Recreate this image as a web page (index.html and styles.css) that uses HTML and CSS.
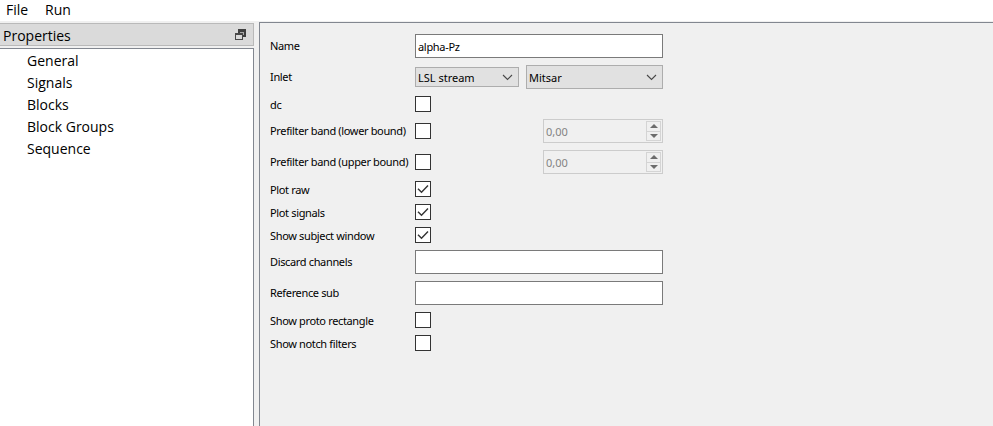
FILE: index.html
```html
<!DOCTYPE html>
<html lang="en">
<head>
<meta charset="utf-8">
<title>Properties</title>
<link rel="stylesheet" href="styles.css">
</head>
<body>
<nav class="menu"><span class="file">File</span><span>Run</span></nav>
<main class="workspace">
  <aside class="dock">
    <header class="dock-title"><span>Properties</span>
      <svg width="11" height="12" viewBox="0 0 11 12" shape-rendering="crispEdges"><path d="M3 0h8v8H8V4H3z" fill="#404040"/><path d="M5 3h4v3H8V4H5z" fill="#aaa"/><path d="M0 4h8v7H0z" fill="#484848"/><path d="M1 6h6v4H1z" fill="#dadada"/></svg>
    </header>
    <ul class="tree">
      <li>General</li><li>Signals</li><li>Blocks</li><li>Block Groups</li><li>Sequence</li>
    </ul>
  </aside>
  <section class="panel">
    <div class="row tall"><span class="label">Name</span><div class="field">alpha-Pz</div></div>
    <div class="row tall"><span class="label">Inlet</span>
      <div class="combo source"><span>LSL stream</span><svg width="11" height="7" viewBox="0 0 11 7"><path d="M1 1l4.5 4.5L10 1" fill="none" stroke="#484848" stroke-width="1.1"/></svg></div>
      <div class="combo device"><span>Mitsar</span><svg width="11" height="7" viewBox="0 0 11 7"><path d="M1 1l4.5 4.5L10 1" fill="none" stroke="#484848" stroke-width="1.1"/></svg></div>
    </div>
    <div class="row short"><span class="label">dc</span><i class="check"></i></div>
    <div class="row tall"><span class="label">Prefilter band (lower bound)</span><i class="check"></i>
      <div class="spin"><span>0,00</span><div class="steps"><b><svg width="8" height="4" viewBox="0 0 8 4"><path d="M0 4L4 0l4 4z"/></svg></b><b><svg width="8" height="4" viewBox="0 0 8 4"><path d="M0 0h8L4 4z"/></svg></b></div></div>
    </div>
    <div class="row tall"><span class="label">Prefilter band (upper bound)</span><i class="check"></i>
      <div class="spin"><span>0,00</span><div class="steps"><b><svg width="8" height="4" viewBox="0 0 8 4"><path d="M0 4L4 0l4 4z"/></svg></b><b><svg width="8" height="4" viewBox="0 0 8 4"><path d="M0 0h8L4 4z"/></svg></b></div></div>
    </div>
    <div class="row short"><span class="label">Plot raw</span><i class="check"><svg width="12" height="10" viewBox="0 0 12 10"><path d="M1 4.7l3.5 3.5L11 1.4"/></svg></i></div>
    <div class="row short"><span class="label">Plot signals</span><i class="check"><svg width="12" height="10" viewBox="0 0 12 10"><path d="M1 4.7l3.5 3.5L11 1.4"/></svg></i></div>
    <div class="row short"><span class="label">Show subject window</span><i class="check"><svg width="12" height="10" viewBox="0 0 12 10"><path d="M1 4.7l3.5 3.5L11 1.4"/></svg></i></div>
    <div class="row tall"><span class="label">Discard channels</span><div class="field"></div></div>
    <div class="row tall"><span class="label">Reference sub</span><div class="field"></div></div>
    <div class="row short"><span class="label">Show proto rectangle</span><i class="check"></i></div>
    <div class="row short"><span class="label">Show notch filters</span><i class="check"></i></div>
  </section>
</main>
</body>
</html>
```
FILE: styles.css
```css
* { box-sizing: border-box; }
body { margin: 0; height: 426px; overflow: hidden; display: flex; flex-direction: column; background: #f0f0f0; color: #000; font: 14px/20px "Open Sans", "Noto Sans", sans-serif; }
svg { display: block; flex: none; }
.menu { height: 21px; flex: none; background: #fff; padding-left: 6px; display: flex; }
.file { width: 39px; }
.workspace { flex: 1; min-height: 0; display: flex; gap: 5px; padding-top: 1px; }
.dock { width: 254px; display: flex; flex-direction: column; gap: 2px; padding-top: 1px; }
.dock-title { height: 23px; flex: none; border: 1px solid #b9b9b9; border-left: 0; background: #dadada; padding: 2px 7px 0 3px; display: flex; justify-content: space-between; }
.dock-title svg { margin-top: 3px; }
.tree { flex: 1; margin: 0; padding: 1px 0 0 27px; list-style: none; background: #fff; border: solid #828790; border-width: 1px 1px 0 0; line-height: 22px; }
.panel { flex: 1; border: solid #828790; border-width: 1px 0 0 1px; padding: 11px 0 0 10px; display: flex; flex-direction: column; gap: 7px; font: 11px/16px "Noto Sans", sans-serif; }
.row { height: 16px; display: flex; align-items: center; flex: none; }
.tall { height: 24px; }
.label { width: 145px; flex: none; white-space: nowrap; letter-spacing: -.35px; }
.short .label { padding-top: 2px; }
.field { width: 248px; height: 24px; border: 1px solid #7a7a7a; background: #fff; padding: 4px 2px; letter-spacing: -.3px; }
.combo { border: 1px solid #adadad; background: #e1e1e1; display: flex; align-items: center; justify-content: space-between; padding: 0 5px 0 2px; }
.combo span, .spin span { padding-top: 2px; }
.source { width: 104px; height: 20px; margin-right: 7px; }
.device { width: 137px; height: 24px; }
.check { width: 16px; height: 16px; flex: none; border: 1px solid #333; background: #fff; display: flex; align-items: center; justify-content: center; }
.check path { fill: none; stroke: #333; stroke-width: 1.4; }
.spin { width: 120px; height: 24px; margin-left: 112px; border: 1px solid #ccc; color: #838383; display: flex; align-items: center; justify-content: space-between; padding: 1px 1px 1px 2px; }
.steps { width: 15px; height: 20px; border: 1px solid #d4d4d4; display: flex; flex-direction: column; }
.steps b { flex: 1; display: flex; align-items: center; justify-content: center; }
.steps b + b { border-top: 1px solid #d4d4d4; }
.steps path { fill: #6d6d6d; }
```
